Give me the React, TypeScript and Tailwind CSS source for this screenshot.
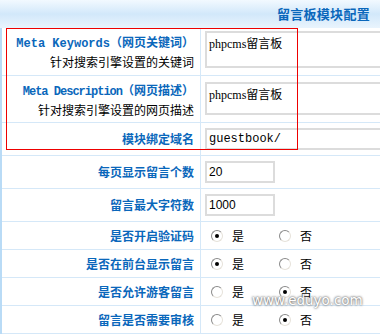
const cjk = "font-['Noto_Sans_CJK_SC','Liberation_Sans',sans-serif]";
const mono = "font-['Liberation_Mono','Noto_Sans_CJK_SC',monospace]";
const serif = "font-['Liberation_Serif',serif]";
const sans = "font-['Liberation_Sans',sans-serif]";

function Radio({ checked }: { checked: boolean }) {
  return (
    <span className="inline-flex w-[12px] h-[12px] rounded-full border border-[#8a8a8a] border-r-[#e6e2da] border-b-[#e6e2da] bg-white items-center justify-center">
      {checked && <span className="w-[4px] h-[4px] rounded-full bg-black" />}
    </span>
  );
}

function Row({
  h,
  label,
  children,
}: {
  h: string;
  label: React.ReactNode;
  children: React.ReactNode;
}) {
  return (
    <div className={`flex border-b border-[#d5e8f8] ${h}`}>
      <div className="w-[199px] shrink-0 border-r border-[#d5e8f8] flex flex-col justify-center items-end pr-[6px] overflow-hidden">
        {label}
      </div>
      <div className="flex-1 flex items-center pl-[4px] overflow-hidden">{children}</div>
    </div>
  );
}

function Label({ text }: { text: string }) {
  return (
    <span className={`text-[12px] font-bold text-[#0a67bb] whitespace-nowrap ${cjk}`}>{text}</span>
  );
}

function YesNo({ yes }: { yes: boolean }) {
  return (
    <div className={`flex items-center text-[12px] text-black ${cjk}`}>
      <span className="ml-[6px] flex"><Radio checked={yes} /></span>
      <span className="ml-[9px]">是</span>
      <span className="ml-[35px] flex"><Radio checked={!yes} /></span>
      <span className="ml-[9px]">否</span>
    </div>
  );
}

export default function App() {
  return (
    <div className="relative w-[380px] h-[335px] bg-white overflow-hidden">
      <div className="h-[28px] bg-gradient-to-b from-[#f2f9ff] via-[#d2e8fa] to-[#e9f4fd] flex items-center justify-end pr-[10px]">
        <span className={`text-[13px] font-bold text-[#0a67bb] tracking-[0.3px] ${cjk}`}>留言板模块配置</span>
      </div>

      <div className="border-l-2 border-[#b9dbf6]">
        <Row
          h="h-[48px]"
          label={
            <>
              <span className="text-[12px] font-bold text-[#0a67bb] whitespace-nowrap leading-[17px]">
                <span className={mono}>Meta Keywords</span>
                <span className={cjk}>（网页关键词）</span>
              </span>
              <span className={`text-[12px] text-black whitespace-nowrap leading-[17px] ${cjk}`}>
                针对搜索引擎设置的关键词
              </span>
            </>
          }
        >
          <div className="w-[200px] h-[37px] shrink-0 border-2 border-[#dcdcdc] px-[2px] pt-[2px] text-[12px] leading-[16px] text-black whitespace-nowrap self-start mt-[3px]">
            <span className={serif}>phpcms</span>
            <span className={cjk}>留言板</span>
          </div>
        </Row>
        <Row
          h="h-[47px]"
          label={
            <>
              <span className="text-[12px] font-bold text-[#0a67bb] whitespace-nowrap leading-[17px]">
                <span className={`${mono} tracking-[-1px]`}>Meta Description</span>
                <span className={cjk}>（网页描述）</span>
              </span>
              <span className={`text-[12px] text-black whitespace-nowrap leading-[17px] ${cjk}`}>
                针对搜索引擎设置的网页描述
              </span>
            </>
          }
        >
          <div className="w-[200px] h-[33px] shrink-0 border-2 border-[#dcdcdc] px-[2px] pt-[2px] text-[12px] leading-[16px] text-black whitespace-nowrap self-start mt-[6px]">
            <span className={serif}>phpcms</span>
            <span className={cjk}>留言板</span>
          </div>
        </Row>
        <Row h="h-[33px]" label={<Label text="模块绑定域名" />}>
          <div className={`w-[200px] h-[22px] shrink-0 border-2 border-[#dcdcdc] px-[2px] flex items-center text-[12px] text-black ${mono}`}>
            guestbook/
          </div>
        </Row>
        <Row h="h-[33px]" label={<Label text="每页显示留言个数" />}>
          <div className={`w-[70px] h-[22px] border-2 border-[#dcdcdc] px-[2px] flex items-center text-[12px] text-black ${sans}`}>
            20
          </div>
        </Row>
        <Row h="h-[33px]" label={<Label text="留言最大字符数" />}>
          <div className={`w-[70px] h-[22px] border-2 border-[#dcdcdc] px-[2px] flex items-center text-[12px] text-black ${sans}`}>
            1000
          </div>
        </Row>
        <Row h="h-[28px]" label={<Label text="是否开启验证码" />}>
          <YesNo yes={true} />
        </Row>
        <Row h="h-[28px]" label={<Label text="是否在前台显示留言" />}>
          <YesNo yes={true} />
        </Row>
        <Row h="h-[28px]" label={<Label text="是否允许游客留言" />}>
          <YesNo yes={false} />
        </Row>
        <Row h="h-[28px]" label={<Label text="留言是否需要审核" />}>
          <YesNo yes={false} />
        </Row>
      </div>

      {/* annotation box */}
      <div className="absolute left-[6px] top-[28px] w-[292px] h-[122px] border border-[#ee0000] pointer-events-none" />

      {/* watermark */}
      <div className="absolute left-[252px] top-[292px] text-[13.5px] leading-[16px] text-white font-['DejaVu_Sans',sans-serif] [text-shadow:0_0_2px_#555,0_0_3px_#888]">
        www.eduyo.com
      </div>
    </div>
  );
}
